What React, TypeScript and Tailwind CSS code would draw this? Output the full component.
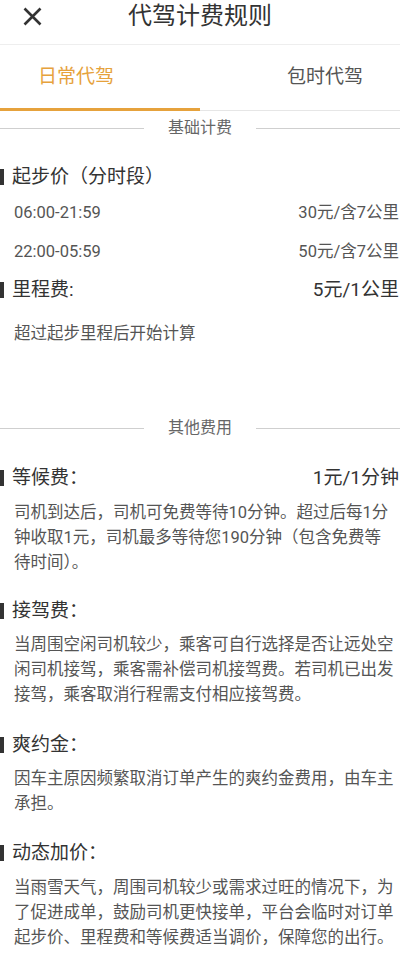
import React from "react";

const font = { fontFamily: 'Roboto, "Noto Sans CJK SC", sans-serif' };

function Divider({ label }: { label: string }) {
  return (
    <div className="flex h-[34px] items-center">
      <div className="h-px flex-1 bg-[#cfcfcf]" />
      <div className="px-6 text-[16px] text-[#666]">{label}</div>
      <div className="h-px flex-1 bg-[#cfcfcf]" />
    </div>
  );
}

function Heading({ title, value, className = "" }: { title: string; value?: string; className?: string }) {
  return (
    <div className={"flex h-[38px] items-center justify-between pr-[1px] " + className}>
      <div className="flex items-center gap-2">
        <div className="h-[16px] w-[4px] bg-[#333]" />
        <div className="text-[19px] text-[#333]">{title}</div>
      </div>
      {value && <div className="text-[19px] text-[#333]">{value}</div>}
    </div>
  );
}

function Para({ lines, className = "" }: { lines: string[]; className?: string }) {
  return (
    <div className={"pl-[14px] text-[16.5px] leading-[25px] text-[#555] " + className}>
      {lines.map((l, i) => (
        <div key={i} className="whitespace-nowrap">
          {l}
        </div>
      ))}
    </div>
  );
}

export default function App() {
  return (
    <div className="h-[954px] w-[400px] overflow-hidden bg-white" style={font}>
      {/* Header */}
      <div className="relative flex h-[45px] items-center justify-center border-b border-[#eeeeee]">
        <svg
          className="absolute left-[22px] top-[7px]"
          width="21"
          height="19"
          viewBox="0 0 21 19"
        >
          <path d="M2.5 1.5 L18.5 17.5 M18.5 1.5 L2.5 17.5" stroke="#333" strokeWidth="2.6" strokeLinecap="butt" />
        </svg>
        <div className="-mt-[13px] text-[24px] text-[#333]">代驾计费规则</div>
      </div>

      {/* Tabs */}
      <div className="relative flex h-[66px] border-b border-[#e6e6e6]">
        <div className="relative flex w-1/2 items-center pl-[38px]">
          <span className="-mt-[1px] text-[19px] text-[#e6a23c]">日常代驾</span>
          <div className="absolute bottom-[-1px] left-0 h-[3px] w-full bg-[#e6a23c]" />
        </div>
        <div className="flex w-1/2 items-center justify-end pr-[37px]">
          <span className="-mt-[1px] text-[19px] text-[#555]">包时代驾</span>
        </div>
      </div>

      <Divider label="基础计费" />

      <Heading title="起步价（分时段）" className="mt-[14px] !h-[36px]" />
      <div className="flex h-[36px] items-center justify-between pl-[14px] pr-[1px] text-[16.5px] text-[#555]">
        <span>06:00-21:59</span>
        <span>30元/含7公里</span>
      </div>
      <div className="mt-[3px] flex h-[36px] items-center justify-between pl-[14px] pr-[1px] text-[16.5px] text-[#555]">
        <span>22:00-05:59</span>
        <span>50元/含7公里</span>
      </div>
      <Heading title="里程费:" value="5元/1公里" className="!h-[40px]" />
      <div className="flex h-[48px] items-center pl-[14px] text-[16.5px] text-[#555]">超过起步里程后开始计算</div>

      <div className="mt-[53px]">
        <Divider label="其他费用" />
      </div>

      <Heading title="等候费：" value="1元/1分钟" className="mt-[14px]" />
      <Para
        className="mt-[3px]"
        lines={[
          "司机到达后，司机可免费等待10分钟。超过后每1分",
          "钟收取1元，司机最多等待您190分钟（包含免费等",
          "待时间）。",
        ]}
      />

      <Heading title="接驾费：" className="mt-[17px]" />
      <Para
        className="mt-[2px]"
        lines={[
          "当周围空闲司机较少，乘客可自行选择是否让远处空",
          "闲司机接驾，乘客需补偿司机接驾费。若司机已出发",
          "接驾，乘客取消行程需支付相应接驾费。",
        ]}
      />

      <Heading title="爽约金：" className="mt-[19px]" />
      <Para
        className="mt-[2px]"
        lines={["因车主原因频繁取消订单产生的爽约金费用，由车主", "承担。"]}
      />

      <Heading title="动态加价：" className="mt-[18px]" />
      <Para
        className="mt-[3px]"
        lines={[
          "当雨雪天气，周围司机较少或需求过旺的情况下，为",
          "了促进成单，鼓励司机更快接单，平台会临时对订单",
          "起步价、里程费和等候费适当调价，保障您的出行。",
        ]}
      />
    </div>
  );
}
